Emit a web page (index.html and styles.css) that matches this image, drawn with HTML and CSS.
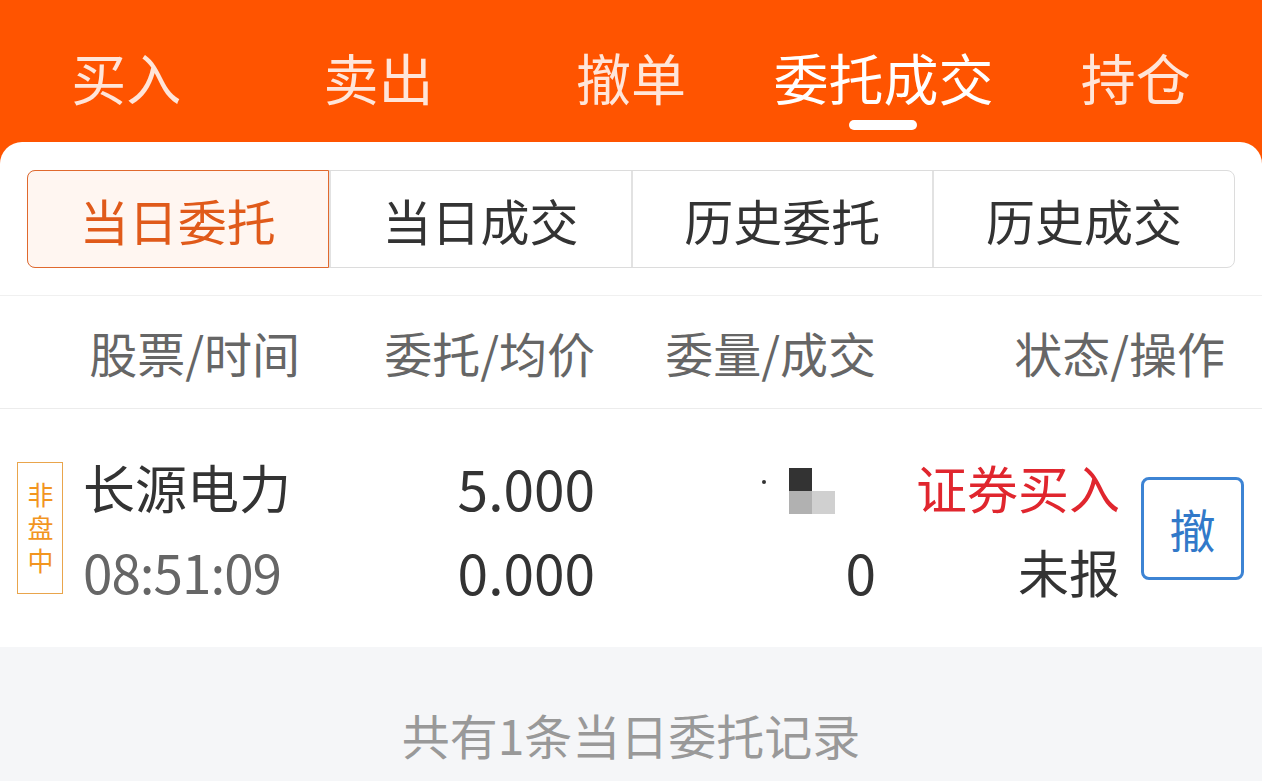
FILE: index.html
```html
<!DOCTYPE html>
<html lang="zh-CN">
<head>
  <meta charset="UTF-8">
  <meta name="viewport" content="width=device-width, initial-scale=1.0">
  <title>委托成交</title>
  <link rel="stylesheet" href="styles.css">
</head>
<body>
  <div class="page">
    <div class="topbar">
      <div class="tab">买入</div>
      <div class="tab">卖出</div>
      <div class="tab">撤单</div>
      <div class="tab active">委托成交</div>
      <div class="tab">持仓</div>
    </div>

    <div class="panel">
      <div class="segments">
        <div class="seg active">当日委托</div>
        <div class="seg">当日成交</div>
        <div class="seg">历史委托</div>
        <div class="seg">历史成交</div>
      </div>

      <div class="thead">
        <div class="th">股票/时间</div>
        <div class="th">委托/均价</div>
        <div class="th">委量/成交</div>
        <div class="th">状态/操作</div>
      </div>

      <div class="row">
        <div class="cell stock">
          <div class="badge"><span class="badge-text">非盘中</span></div>
          <div class="lines">
            <div class="name">长源电力</div>
            <div class="time">08:51:09</div>
          </div>
        </div>
        <div class="cell num">
          <div>5.000</div>
          <div>0.000</div>
        </div>
        <div class="cell num">
          <div class="mosaic-line">
            <span class="speck"></span>
            <span class="mosaic">
              <i class="px dark"></i><i class="px blank"></i>
              <i class="px mid"></i><i class="px light"></i>
            </span>
          </div>
          <div>0</div>
        </div>
        <div class="cell status">
          <div class="lines right">
            <div class="buy">证券买入</div>
            <div>未报</div>
          </div>
          <button class="cancel">撤</button>
        </div>
      </div>

      <div class="footer">共有1条当日委托记录</div>
    </div>
  </div>
</body>
</html>
```

FILE: styles.css
```css
body {
  margin: 0;
  font-family: "Noto Sans CJK SC", "Noto Sans", sans-serif;
  background: #f5f6f8;
  color: #333;
}
.page {
  background: #ff5400;
  min-height: 781px;
}
.topbar {
  display: flex;
  height: 162px;
}
.tab {
  flex: 1;
  text-align: center;
  font-size: 55px;
  line-height: 1;
  padding-top: 49px;
  color: rgba(255, 255, 255, 0.85);
  position: relative;
}
.tab.active {
  color: #fff;
}
.tab.active::after {
  content: "";
  position: absolute;
  left: 50%;
  top: 120px;
  width: 68px;
  height: 10px;
  margin-left: -34px;
  background: #fff;
  border-radius: 5px;
}
.panel {
  margin-top: -20px;
  background: #fff;
  border-radius: 22px 22px 0 0;
  min-height: 639px;
  display: flex;
  flex-direction: column;
}
.segments {
  display: flex;
  margin: 28px 27px 27px;
  height: 98px;
  border: 1px solid #dcdcdc;
  border-radius: 8px;
  box-sizing: border-box;
}
.seg {
  flex: 1;
  display: flex;
  align-items: center;
  justify-content: center;
  font-size: 49px;
  color: #333;
  border-left: 2px solid #e2e2e2;
}
.seg:first-child {
  border-left: none;
}
.seg.active {
  margin: -1px 0 -1px -1px;
  background: #fff6f1;
  border: 1px solid #e0692e;
  border-radius: 8px 0 0 8px;
  color: #e05a1a;
}
.thead {
  display: grid;
  grid-template-columns: 300px 295px 281px 1fr;
  height: 112px;
  align-items: center;
  padding-right: 37px;
  border-top: 1px solid #f0f0f0;
  border-bottom: 1px solid #ececec;
}
.th {
  text-align: right;
  font-size: 48px;
  color: #666;
}
.row {
  display: grid;
  grid-template-columns: 300px 295px 281px 1fr;
  height: 238px;
  align-items: center;
}
.cell {
  font-size: 51px;
  line-height: 84px;
  padding-top: 2px;
}
.num {
  text-align: right;
  color: #333;
  font-size: 55px;
}
.stock {
  display: flex;
  align-items: center;
  padding-left: 17px;
}
.badge {
  width: 44px;
  height: 130px;
  border: 1px solid #e9a54c;
  color: #f2951f;
  display: flex;
  align-items: center;
  justify-content: center;
  margin-right: 20px;
  margin-top: -2px;
}
.badge-text {
  writing-mode: vertical-rl;
  font-size: 26px;
  line-height: 26px;
  letter-spacing: 7px;
  margin-bottom: -7px;
}
.name {
  color: #333;
  font-size: 52px;
}
.time {
  color: #666;
  font-size: 53px;
  letter-spacing: -1px;
}
.mosaic-line {
  height: 84px;
  display: flex;
  justify-content: flex-end;
  align-items: center;
  padding-right: 41px;
}
.speck {
  width: 4px;
  height: 4px;
  border-radius: 2px;
  background: #333;
  margin-right: 23px;
  margin-top: -10px;
}
.mosaic {
  display: grid;
  grid-template-columns: 23px 23px;
  grid-template-rows: 23px 23px;
  margin-top: 8px;
}
.px {
  display: block;
}
.px.dark { background: #333; }
.px.mid { background: #b1b1b1; }
.px.light { background: #d0d0d0; }
.status {
  display: flex;
  align-items: center;
  justify-content: flex-end;
  padding-right: 18px;
}
.lines.right {
  text-align: right;
}
.buy {
  color: #e0262e;
}
.cancel {
  width: 103px;
  height: 103px;
  margin-left: 21px;
  margin-top: -2px;
  border: 3px solid #3d84d4;
  border-radius: 8px;
  background: #fff;
  color: #3179c9;
  font-family: inherit;
  font-size: 46px;
  padding: 0;
}
.footer {
  flex: 1;
  background: #f5f6f8;
  text-align: center;
  font-size: 48px;
  color: #999;
  padding-top: 52px;
}
```
